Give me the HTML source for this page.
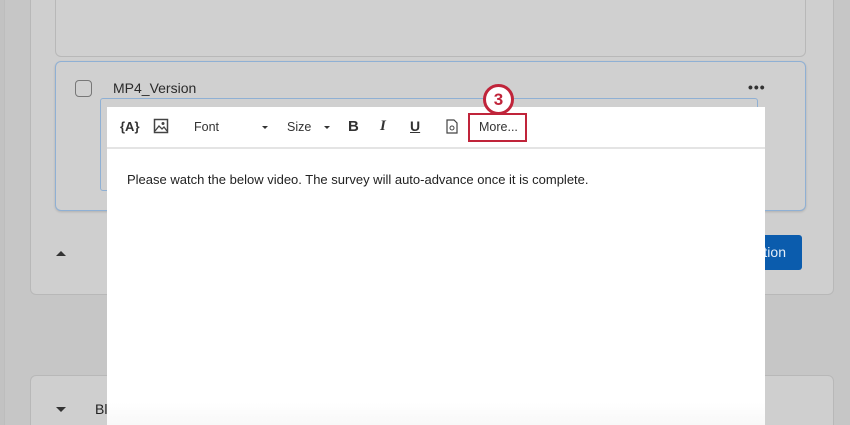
<!DOCTYPE html>
<html style="width:850px;height:425px;overflow:hidden"><head><style>
*{margin:0;padding:0;box-sizing:border-box}
body{width:850px;height:425px;overflow:hidden;background:#c6c6c6;font-family:"Liberation Sans",Arial,sans-serif;position:relative}
.a{position:absolute}
.panel{background:#cfcfcf;border:1px solid #b8b8b8;border-radius:6px}
</style></head><body>
<div class="a" style="left:0;top:0;width:5px;height:425px;background:#c2c2c2;border-right:1px solid #bdbdbd"></div>
<div class="a panel" style="left:30px;top:-10px;width:804px;height:305px"></div>
<div class="a panel" style="left:55px;top:-10px;width:751px;height:67px;background:#d0d0d0"></div>
<div class="a" style="left:55px;top:61px;width:751px;height:150px;border:1.5px solid #8fb0d4;border-radius:6px;background:#d0d0d0;box-shadow:0 1px 2px rgba(0,0,0,.15)"></div>
<div class="a" style="left:75px;top:80px;width:17px;height:17px;border:1.5px solid #777;border-radius:4px"></div>
<div class="a" style="left:113px;top:80px;font-size:14px;color:#2a2a2a">MP4_Version</div>
<div class="a" style="left:748px;top:79px;font-size:14px;color:#333;letter-spacing:1px;font-weight:bold">•••</div>
<div class="a" style="left:100px;top:98px;width:658px;height:93px;border:1.5px solid #8fb0d4;border-radius:3px"></div>
<div class="a" style="left:755px;top:235px;width:47px;height:35px;background:#0b5cad;border-radius:3px;color:#e6eef8;font-size:14px;line-height:35px;overflow:hidden"><span style="position:absolute;right:16px">tion</span></div>
<div class="a" style="left:56px;top:251px;width:0;height:0;border-left:5px solid transparent;border-right:5px solid transparent;border-bottom:5px solid #333"></div>
<div class="a panel" style="left:30px;top:375px;width:804px;height:70px"></div>
<div class="a" style="left:56px;top:407px;width:0;height:0;border-left:5px solid transparent;border-right:5px solid transparent;border-top:5px solid #333"></div>
<div class="a" style="left:95px;top:401px;font-size:14px;color:#222">Bl</div>
<div class="a" style="left:107px;top:107px;width:658px;height:318px;background:linear-gradient(#fff 93%,#f8f8f8)"></div>
<div class="a" style="left:107px;top:147px;width:658px;height:2px;background:#e4e4e4"></div>
<div class="a" style="left:120px;top:119px;font-size:13px;font-weight:bold;color:#333">{A}</div>
<svg class="a" style="left:153px;top:118px" width="16" height="16" viewBox="0 0 16 16"><rect x="1.5" y="1.5" width="13" height="13" fill="none" stroke="#444" stroke-width="1.5"/><circle cx="10" cy="5.5" r="1.5" fill="#444"/><path d="M2 13l4-5 3 3 2-2 3 4" fill="none" stroke="#444" stroke-width="1.3"/></svg>
<div class="a" style="left:194px;top:120px;font-size:12.5px;color:#333">Font</div>
<div class="a" style="left:262px;top:126px;border-left:3px solid transparent;border-right:3px solid transparent;border-top:3px solid #333"></div>
<div class="a" style="left:287px;top:120px;font-size:12.5px;color:#333">Size</div>
<div class="a" style="left:324px;top:126px;border-left:3px solid transparent;border-right:3px solid transparent;border-top:3px solid #333"></div>
<div class="a" style="left:348px;top:118px;font-size:15px;font-weight:bold;color:#333">B</div>
<div class="a" style="left:380px;top:118px;font-size:15px;font-weight:bold;font-style:italic;color:#333;font-family:'Liberation Serif',serif">I</div>
<div class="a" style="left:410px;top:118px;font-size:14px;font-weight:bold;color:#333;text-decoration:underline">U</div>
<svg class="a" style="left:446px;top:119px" width="12" height="15" viewBox="0 0 12 15"><path d="M1 1h7l3 3v10H1z" fill="none" stroke="#444" stroke-width="1.2"/><circle cx="6" cy="9" r="2" fill="none" stroke="#444"/></svg>
<div class="a" style="left:468px;top:113px;width:59px;height:29px;border:2px solid #c0243a"></div>
<div class="a" style="left:479px;top:120px;font-size:12.5px;color:#333">More...</div>
<div class="a" style="left:483px;top:84px;width:31px;height:31px;border:3px solid #c0243a;border-radius:50%;background:#fff;text-align:center;font-size:17px;line-height:25px;color:#c0243a;font-weight:bold">3</div>
<div class="a" style="left:127px;top:172px;font-size:13px;color:#222">Please watch the below video. The survey will auto-advance once it is complete.</div>
</body></html>
